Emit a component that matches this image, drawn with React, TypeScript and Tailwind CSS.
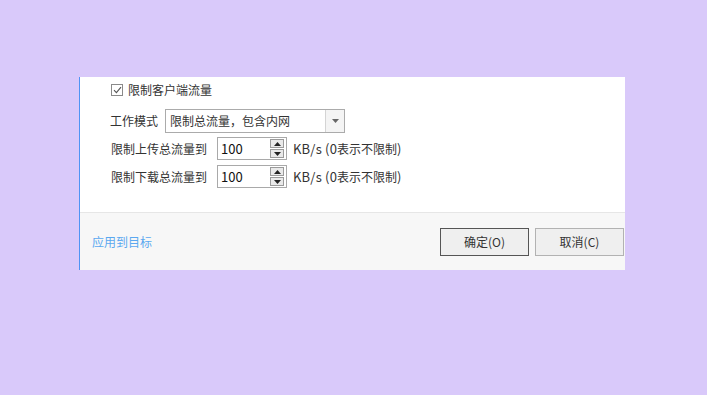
import React from 'react';

const font = { fontFamily: '"Noto Sans CJK SC", "Noto Sans", sans-serif' };

const Spin: React.FC<{ value: string }> = ({ value }) => (
  <div className="flex h-[23px] w-[70px] items-center border border-[#a9a9a9] bg-white pl-[3px] pr-[2px]">
    <span className="flex-1 text-[13px] leading-none text-[#111]">{value}</span>
    <div className="flex flex-col gap-[1px]">
      <div className="flex h-[9px] w-[14px] items-center justify-center border border-[#9a9a9a] bg-[#e9e9e9]">
        <svg width="7" height="4" viewBox="0 0 7 4"><path d="M0 4 L3.5 0 L7 4 Z" fill="#222" /></svg>
      </div>
      <div className="flex h-[9px] w-[14px] items-center justify-center border border-[#9a9a9a] bg-[#e9e9e9]">
        <svg width="7" height="4" viewBox="0 0 7 4"><path d="M0 0 L3.5 4 L7 0 Z" fill="#222" /></svg>
      </div>
    </div>
  </div>
);

const Unit: React.FC = () => (
  <span className="ml-[6px] leading-none">
    <span className="text-[13px] tracking-[0.2px]">KB/s (0</span>表示不限制<span className="text-[13px]">)</span>
  </span>
);

const App: React.FC = () => {
  return (
    <div className="h-[395px] w-[707px] bg-[#d9c9fa] pl-[79px] pt-[77px]" style={font}>
      <div className="flex h-[193px] w-[546px] flex-col border-l border-[#4f94f5] bg-white">
        {/* Settings */}
        <div className="flex h-[135px] flex-col pl-[30px] text-[12px] text-[#333]">
          <div className="mt-[7px] flex h-[12px] items-center pl-[1px]">
            <div className="flex h-[12px] w-[12px] items-center justify-center border border-[#8a8a8a] bg-white">
              <svg width="9" height="8" viewBox="0 0 9 8"><path d="M1 4.2 L3.4 6.6 L8 1.2" stroke="#555" strokeWidth="1.1" fill="none" /></svg>
            </div>
            <span className="ml-[5px] leading-none">限制客户端流量</span>
          </div>

          <div className="mt-[13px] flex h-[24px] items-center">
            <span className="w-[55px] leading-none">工作模式</span>
            <div className="flex h-[24px] w-[180px] items-center border border-[#ababab] bg-white">
              <span className="flex-1 pl-[4px] leading-none">限制总流量，包含内网</span>
              <div className="flex h-full w-[19px] items-center justify-center border-l border-[#d4d4d4] bg-[#f4f4f4]">
                <svg width="7" height="4" viewBox="0 0 7 4"><path d="M0 0 L3.5 4 L7 0 Z" fill="#666" /></svg>
              </div>
            </div>
          </div>

          <div className="mt-[4px] flex h-[23px] items-center pl-[1px]">
            <span className="w-[106px] leading-none">限制上传总流量到</span>
            <Spin value="100" />
            <Unit />
          </div>

          <div className="mt-[5px] flex h-[23px] items-center pl-[1px]">
            <span className="w-[106px] leading-none">限制下载总流量到</span>
            <Spin value="100" />
            <Unit />
          </div>
        </div>

        {/* Footer */}
        <div className="flex flex-1 items-center border-t border-[#e6e6e6] bg-[#f7f7f7] pl-[12px] pr-[1px] pt-[1px]">
          <span className="flex-1 text-[12px] text-[#5aa8f0]">应用到目标</span>
          <button className="h-[28px] w-[89px] border border-[#555] bg-[#efefef] text-[12px] text-[#333]">确定(O)</button>
          <button className="ml-[6px] h-[28px] w-[89px] border border-[#b2b2b2] bg-[#efefef] text-[12px] text-[#333]">取消(C)</button>
        </div>
      </div>
    </div>
  );
};

export default App;
